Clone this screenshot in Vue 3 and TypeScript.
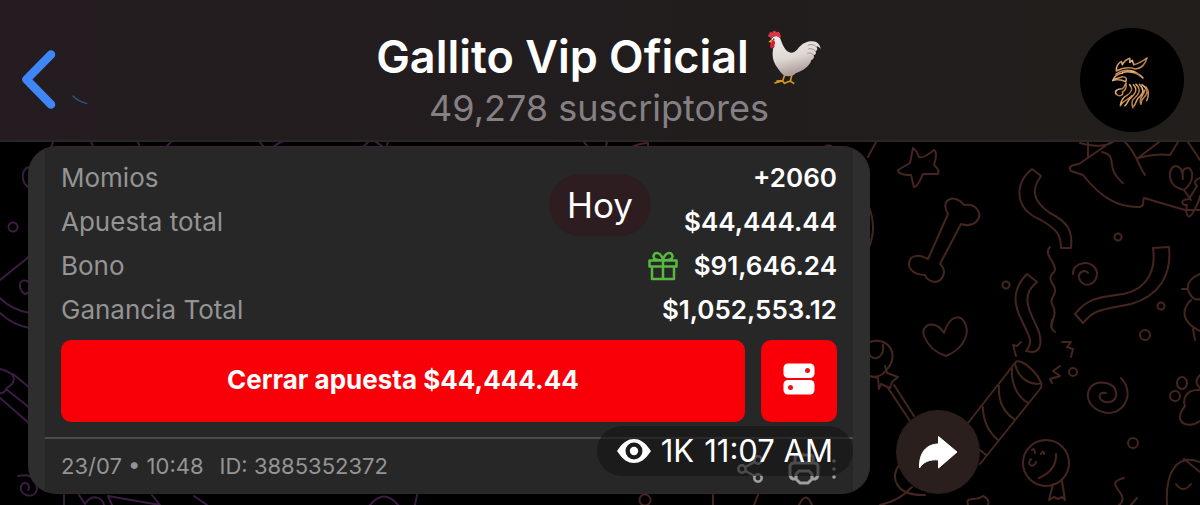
<script setup lang="ts">
interface BetLine {
  label: string
  value: string
  bonus?: boolean
}

const lines: BetLine[] = [
  { label: 'Momios', value: '+2060' },
  { label: 'Apuesta total', value: '$44,444.44' },
  { label: 'Bono', value: '$91,646.24', bonus: true },
  { label: 'Ganancia Total', value: '$1,052,553.12' },
]
</script>

<template>
  <div class="screen">
    <header class="top">
      <button class="back" type="button" aria-label="Volver">
        <svg viewBox="20 48 72 64" fill="none" stroke-linecap="round" stroke-linejoin="round">
          <path d="M51 54.500 26.500 79.500 51 104.500" stroke="#3f86f7" stroke-width="8.500" />
          <path d="M73 96q6 6 14 7.500" stroke="#2c5794" stroke-width="1.200" />
        </svg>
      </button>
      <div class="heading">
        <h1>
          <span>Gallito Vip Oficial</span>
          <svg class="rooster" viewBox="36 30 165 168" aria-hidden="true">
            <defs>
              <linearGradient id="plume" x1="0" y1="0" x2="0.300" y2="1">
                <stop offset="0" stop-color="#f4f0ee" />
                <stop offset="0.600" stop-color="#ded6d2" />
                <stop offset="1" stop-color="#a99b97" />
              </linearGradient>
            </defs>
            <g fill="none" stroke="#d39a1c" stroke-width="5" stroke-linecap="round" stroke-linejoin="round">
              <path d="M90 163 83 182 60 189M83 182 66 183M83 183 88 190" />
              <path d="M111 163 106 183 90 189M106 183 116 190" />
            </g>
            <path d="M50 56C55 46 69 46 75 54C80 65 84 82 97 94C108 102 119 98 128 87C137 75 149 66 166 64C184 61 196 72 197 87C191 80 187 79 184 80C189 87 187 92 181 93C185 99 182 105 176 105C179 112 174 119 169 120C165 138 143 153 122 160C116 169 98 171 86 166C75 154 60 137 55 119C50 100 56 88 54 76C51 70 47 64 50 56Z" fill="url(#plume)" />
            <path d="M184 80C176 73 166 72 158 76M181 93C174 86 166 85 160 87M176 105C169 99 162 98 157 100" fill="none" stroke="#8f8580" stroke-width="2.500" />
            <path d="M45 52C37 50 38 43 44 43C40 37 47 33 52 38C54 31 61 31 63 37C70 32 77 38 75 44C80 47 77 53 74 54C65 46 55 47 50 56Z" fill="#d93648" />
            <path d="M51 60C59 58 63 68 58 75C61 82 54 89 48 84C43 81 46 73 47 70Z" fill="#ce2236" />
            <path d="M50 57 40 66 50 68Z" fill="#e7a52b" />
            <circle cx="56" cy="58" r="2.500" fill="#3a2522" />
          </svg>
        </h1>
        <p>49,278 suscriptores</p>
      </div>
      <button class="avatar" type="button" aria-label="Perfil del canal">
        <svg viewBox="0 0 312 312" fill="none" stroke-linecap="round" stroke-linejoin="round">
          <defs>
            <linearGradient id="gold" x1="0" y1="0" x2="1" y2="1">
              <stop offset="0" stop-color="#a8602c" />
              <stop offset="0.400" stop-color="#e8bd88" />
              <stop offset="0.600" stop-color="#b87539" />
              <stop offset="1" stop-color="#cbb190" />
            </linearGradient>
          </defs>
          <g transform="translate(-60 -55)" stroke="url(#gold)" stroke-width="4.500">
            <path d="M169 184C168 170 174 161 184 155L187 165C192 155 200 149 210 146L209 158L217 152L221 165C237 162 249 154 261 145C255 165 242 177 226 178C210 172 192 172 169 184Z" />
            <path d="M168 193C193 176 225 177 249 205C229 187 205 183 188 189" />
            <path d="M188 190C174 192 163 199 158 213C171 207 184 210 197 216C202 207 197 200 188 201L166 208" />
            <path d="M198 220C200 232 195 243 187 247C193 256 178 263 169 254C161 243 174 237 187 237C194 233 195 226 198 220Z" />
            <path d="M209 225C220 237 215 248 201 257C189 263 183 273 181 288C192 270 210 268 215 258" />
            <path d="M220 225C235 240 225 253 213 264C202 273 204 280 195 288M228 224C248 242 232 258 221 268C212 276 216 285 219 294" />
            <path d="M238 224C254 239 250 251 240 260C226 270 232 276 222 289M246 225C265 239 264 252 252 263C244 270 243 276 243 284C233 268 252 257 254 242M258 232C268 245 267 258 260 273" />
          </g>
        </svg>
      </button>
    </header>

    <main class="chat">
      <svg class="doodles" viewBox="0 142 1200 363" preserveAspectRatio="xMidYMin slice" aria-hidden="true" fill="none" stroke-width="2" stroke-linecap="round" stroke-linejoin="round">
        <g stroke="#3b1d42">
          <path d="M53 142 51 148M91 142 95 150M138 142 140 148M171 142 165 148M260 142 268 153Q276 143 284 141M368 142 360 150M376 142 386 149 388 142" />
          <path d="M29 167C20 170 21 184 30 188" />
          <circle cx="13" cy="227" r="4.500" />
          <path d="M0 280 30 256M0 298C8 306 18 311 30 313M0 313Q14 326 30 328M29 282C17 276 18 291 25 294L30 292" />
          <path d="M0 369C12 372 17 377 12 384L7 388Q4 394 0 393M13 374 30 388M6 389 30 408M0 398 30 424" />
          <path d="M18 476C37 472 38 487 36 492C32 499 19 495 21 486C24 479 32 485 28 490M64 495V505M79 495 85 504C92 493 102 497 104 505M112 505 108 496 160 505 152 495M194 496 207 505M370 505Q384 488 398 505M417 495 415 505" />
        </g>
        <g stroke="#45251f">
          <path d="M584 142 590 150M607 142 605 150M626 150Q638 143 648 143V150M822 150Q828 141 836 150" />
          <path d="M868 157 876 142M869 207Q877 228 869 247" />
          <path d="M913 148Q917 151 919 157Q923 159 934 150Q938 152 934 165Q940 170 938 174L923 174Q917 188 914 187L911 175Q898 175 898 170L910 163Z" />
          <path d="M948 214C939 199 955 193 964 205C976 203 984 214 976 222Q970 227 961 224L940 264C947 270 944 281 935 282Q927 281 925 275C913 275 905 267 911 258Q917 253 928 259Z" />
          <path d="M1032 169 1041 176C1030 191 1034 202 1050 213C1068 222 1073 231 1071 248H1061C1061 234 1056 229 1041 220C1014 209 1014 184 1032 169Z" />
          <path d="M1050 247C1042 255 1059 264 1054 272C1046 279 1054 284 1055 289C1057 294 1048 299 1053 306C1057 314 1052 320 1051 327" />
          <path d="M1027 274 1037 282C1020 295 1029 311 1037 327C1043 341 1041 352 1032 352L1026 351C1034 341 1029 337 1023 323C1012 303 1013 288 1027 274Z" />
          <path d="M1073 274C1072 262 1093 258 1097 272C1098 286 1082 289 1079 278C1078 272 1085 269 1088 273" />
          <path d="M1153 248 1169 247C1172 275 1159 296 1131 304C1100 310 1095 309 1083 323L1075 314C1089 296 1104 297 1123 294C1149 289 1156 268 1153 248Z" />
          <circle cx="1118" cy="237" r="3.500" /><circle cx="1006" cy="285" r="3.500" /><circle cx="1161" cy="306" r="3.500" />
          <path d="M1088 142V158M1080 143Q1102 149 1113 142M1111 142 1079 164Q1066 166 1071 171L1083 175C1101 198 1118 207 1138 207C1146 207 1142 200 1144 198L1185 210H1200M1102 152C1120 157 1103 166 1123 183M1125 142C1137 154 1137 163 1145 175M1159 142 1138 158Q1154 153 1170 155L1178 142M1188 142 1200 160" />
          <path d="M1184 190C1165 186 1168 166 1176 166Q1183 167 1183 179Q1181 167 1189 168C1195 173 1192 184 1184 190L1191 200M1200 178Q1192 181 1197 186L1189 199C1178 200 1183 206 1187 205C1185 214 1188 220 1192 214Q1199 202 1200 196" />
          <path d="M1200 274Q1186 280 1188 290Q1193 302 1200 299M1182 289H1188M1191 300C1180 311 1183 323 1200 331M1193 329 1195 340" />
          <path d="M944 333C935 318 920 325 924 336Q930 351 946 356Q965 348 967 331C965 313 951 312 944 333Z" />
          <path d="M870 342C889 336 899 355 888 368Q881 379 870 376M883 345C885 358 873 362 869 354M885 366 887 373 898 377 892 382 890 388 881 384 879 389 878 378 869 376M888 388 910 421M894 385 914 416" />
          <path d="M1013 345 1016 356M1013 345 1017 346 1021 342M1062 342H1071L1067 347 1073 349 1071 357M1060 366 1053 371 1060 376 1050 379 1052 383M1052 320Q1050 329 1055 332" />
          <path d="M968 423 1015 363C1020 354 1048 382 1040 389L980 464M1015 363C1018 382 1036 386 1041 383M1012 369C1011 385 1018 397 1028 403M999 386C998 402 1005 413 1014 419M983 407C983 425 991 434 998 440M980 450 986 455" />
          <circle cx="1073" cy="372" r="4" /><circle cx="1145" cy="335" r="5" /><circle cx="1133" cy="443" r="5" />
          <path d="M1121 378C1137 395 1121 418 1103 412C1080 406 1085 378 1106 383C1119 386 1119 400 1110 402C1098 404 1096 391 1106 393" />
          <ellipse cx="1182" cy="383" rx="5" ry="6" /><circle cx="1175" cy="396" r="5" /><path d="M1200 375Q1193 382 1200 388M1200 390C1184 389 1183 401 1185 406C1172 422 1187 430 1200 421" />
          <circle cx="1046" cy="463" r="23" /><path d="M1056 454Q1057 470 1039 478M1032 450Q1034 447 1035 453M1041 454Q1044 449 1044 454M1031 459C1025 466 1035 468 1036 462M1053 484 1049 500 1054 497 1058 499 1062 497 1065 500 1062 481" />
          <path d="M1124 478C1108 482 1118 488 1121 494Q1125 501 1119 505M1137 498 1131 505M1167 505C1165 472 1177 453 1200 462M1184 459 1200 472M1176 484Q1183 494 1191 484" />
          <path d="M899 465C890 477 895 496 925 495M912 487Q899 501 880 505M968 505C965 495 976 502 983 496Q990 499 988 505" />
          <circle cx="645" cy="500" r="5.500" /><path d="M713 495V505M758 495 754 505M799 505Q806 490 812 505" />
        </g>
      </svg>

      <article class="bubble">
        <div class="ticket">
          <dl class="lines">
            <div v-for="line in lines" :key="line.label" class="line">
              <dt>{{ line.label }}</dt>
              <dd>
                <svg v-if="line.bonus" class="gift" viewBox="0 0 30 30" fill="none" stroke="#58b840" stroke-width="2.500" stroke-linejoin="round" aria-hidden="true">
                  <path d="M1.500 9.500H28.500V15.500H1.500ZM4 15.500H26V28H4ZM15 9.500V28M15 9C9 10 5 8 5.500 5C6.500 0 13 1 15 9ZM15 9C21 10 25 8 24.500 5C23.500 0 17 1 15 9Z" />
                </svg>
                <span>{{ line.value }}</span>
              </dd>
            </div>
          </dl>
          <div class="actions">
            <button class="cashout" type="button">Cerrar apuesta $44,444.44</button>
            <button class="settings" type="button" aria-label="Opciones de cierre">
              <svg viewBox="0 0 32 32">
                <rect x="0.500" y="0.500" width="31" height="14.500" rx="4.500" fill="#fff" />
                <rect x="0.500" y="17" width="31" height="14.500" rx="4.500" fill="#fff" />
                <circle cx="24.500" cy="7.500" r="2.500" fill="#ed1216" />
                <circle cx="7.500" cy="24.500" r="2.500" fill="#ed1216" />
              </svg>
            </button>
          </div>
          <footer class="meta">
            <span>23/07 • 10:48</span>
            <span>ID: 3885352372</span>
            <div class="tools">
              <button class="share" type="button" aria-label="Compartir">
                <svg width="26" height="28" viewBox="0 0 26 28" fill="none" stroke="#a0a0a0" stroke-width="2.500">
                  <circle cx="5" cy="14" r="3.700" /><circle cx="21" cy="5" r="3.700" /><circle cx="21" cy="23" r="3.700" /><path d="m8.500 12 9-5M8.500 16l9 5" />
                </svg>
              </button>
              <button type="button" aria-label="Imprimir">
                <svg width="32" height="32" viewBox="0 0 32 32" fill="none" stroke="#a0a0a0" stroke-width="3" stroke-linejoin="round">
                  <path d="M7 10V5Q7 2 10 2H22Q25 2 25 5V10M9 26H5Q2 25 2 21V14Q2 10 6 10H26Q30 10 30 14V21Q30 25 27 26H23M11 18H21L24 21V26L20 30H12L8 26V21Z" />
                </svg>
              </button>
              <button type="button" aria-label="Más">
                <svg width="4" height="20" viewBox="0 0 4 20" fill="#a0a0a0"><circle cx="2" cy="2" r="1.800" /><circle cx="2" cy="10" r="1.800" /><circle cx="2" cy="18" r="1.800" /></svg>
              </button>
            </div>
          </footer>
        </div>
        <div class="stamp">
          <svg width="34" height="26" viewBox="0 0 34 26" aria-hidden="true">
            <path fill="#fff" fill-rule="evenodd" d="M0 13C6 4 11 1 17 1S28 4 34 13C28 22 23 25 17 25S6 22 0 13ZM17 4.500A8.500 8.500 0 1 0 17 21.500A8.500 8.500 0 1 0 17 4.500Z" />
            <circle cx="17" cy="13" r="4.200" fill="#fff" />
          </svg>
          <span>1K</span>
          <time>11:07 AM</time>
        </div>
      </article>

      <button class="forward" type="button" aria-label="Reenviar">
        <svg width="40" height="34" viewBox="0 0 40 34" fill="#fff" stroke="#fff" stroke-width="1" stroke-linejoin="round">
          <path d="M20.500 1.500 39 17 20.500 33V25C12 24 5 27 1.500 33C1 17 9 9 20.500 9Z" />
        </svg>
      </button>

      <div class="day">Hoy</div>
    </main>
  </div>
</template>

<style>
body {
  margin: 0;
  background: #000;
}
</style>

<style scoped>
.screen {
  min-height: 100vh;
  display: flex;
  flex-direction: column;
  overflow: hidden;
  background: #000;
  color: #fff;
  font-family: Inter, "Liberation Sans", sans-serif;
}

button {
  padding: 0;
  border: 0;
  background: none;
  color: inherit;
  font: inherit;
  cursor: pointer;
}

svg {
  display: block;
}

.top {
  display: grid;
  grid-template-columns: 1fr auto 1fr;
  align-items: center;
  padding: 28px 16px 8px 20px;
  border-bottom: 2px solid #2a2627;
  background: linear-gradient(90deg, #241c20, #211d1d 60%, #221e1b);
}

.back {
  justify-self: start;
}

.back svg {
  width: 72px;
  height: 64px;
}

.heading {
  padding-right: 6px;
  text-align: center;
}

h1 {
  display: flex;
  align-items: center;
  gap: 18px;
  margin: 0;
  font-size: 45px;
  font-weight: 600;
  line-height: 52px;
}

h1 span {
  padding-bottom: 3px;
}

.rooster {
  width: 55px;
  height: 56px;
}

.heading p {
  margin: 0;
  color: #858083;
  font-size: 36px;
  line-height: 44px;
}

.avatar {
  justify-self: end;
  width: 104px;
  height: 104px;
  overflow: hidden;
  border-radius: 50%;
  background: #000;
}

.chat {
  position: relative;
  display: flex;
  flex: 1;
  align-items: flex-end;
  gap: 26px;
  padding: 4px 28px 11px;
}

.doodles {
  position: absolute;
  inset: 0;
  width: 100%;
  height: 100%;
}

.bubble {
  position: relative;
  box-sizing: border-box;
  width: 73.600%;
  overflow: hidden;
  padding: 0 17px;
  border-top: 1px solid #392333;
  border-bottom: 1px solid #33252d;
  border-radius: 28px;
  background: #2e2e2e;
}

.ticket {
  background: #272727;
}

.lines {
  margin: 0;
  padding: 9px 16px 8px;
}

.line {
  display: flex;
  align-items: center;
  justify-content: space-between;
  font-size: 26px;
  line-height: 44px;
}

dt {
  color: #949494;
}

dd {
  display: flex;
  align-items: center;
  gap: 16px;
  margin: 0;
  font-weight: 600;
}

.gift {
  width: 30px;
  height: 30px;
}

.actions {
  display: flex;
  gap: 16px;
  padding: 0 16px 15px;
}

.cashout,
.settings {
  height: 82px;
  padding-bottom: 4px;
  border-radius: 10px;
  background: #f90008;
}

.cashout {
  flex: 1;
  font-size: 26px;
  font-weight: 700;
}

.settings {
  display: grid;
  place-items: center;
  width: 76px;
}

.settings svg {
  width: 32px;
  height: 32px;
}

.meta {
  display: flex;
  align-items: center;
  gap: 16px;
  padding: 0 17px 0 16px;
  border-top: 2px solid #4b4b4b;
  color: #949494;
  font-size: 22px;
  line-height: 54px;
}

.tools {
  display: flex;
  align-items: center;
  gap: 12px;
  margin-left: auto;
  padding-top: 6px;
}

.share {
  margin-right: 13px;
}

.stamp {
  position: absolute;
  right: 17px;
  bottom: 17px;
  display: flex;
  align-items: center;
  gap: 10px;
  padding: 0 20px;
  border-radius: 25px;
  background: rgb(20 20 20 / 60%);
  font-size: 31px;
  line-height: 50px;
}

.forward {
  position: relative;
  display: grid;
  place-items: center;
  width: 84px;
  height: 84px;
  border-radius: 50%;
  background: #2a1f1c;
}

.day {
  position: absolute;
  top: 32px;
  left: 50%;
  padding: 0 18px;
  border-radius: 31px;
  background: #2e1d20;
  font-size: 35px;
  line-height: 62px;
  transform: translateX(-50%);
}
</style>
